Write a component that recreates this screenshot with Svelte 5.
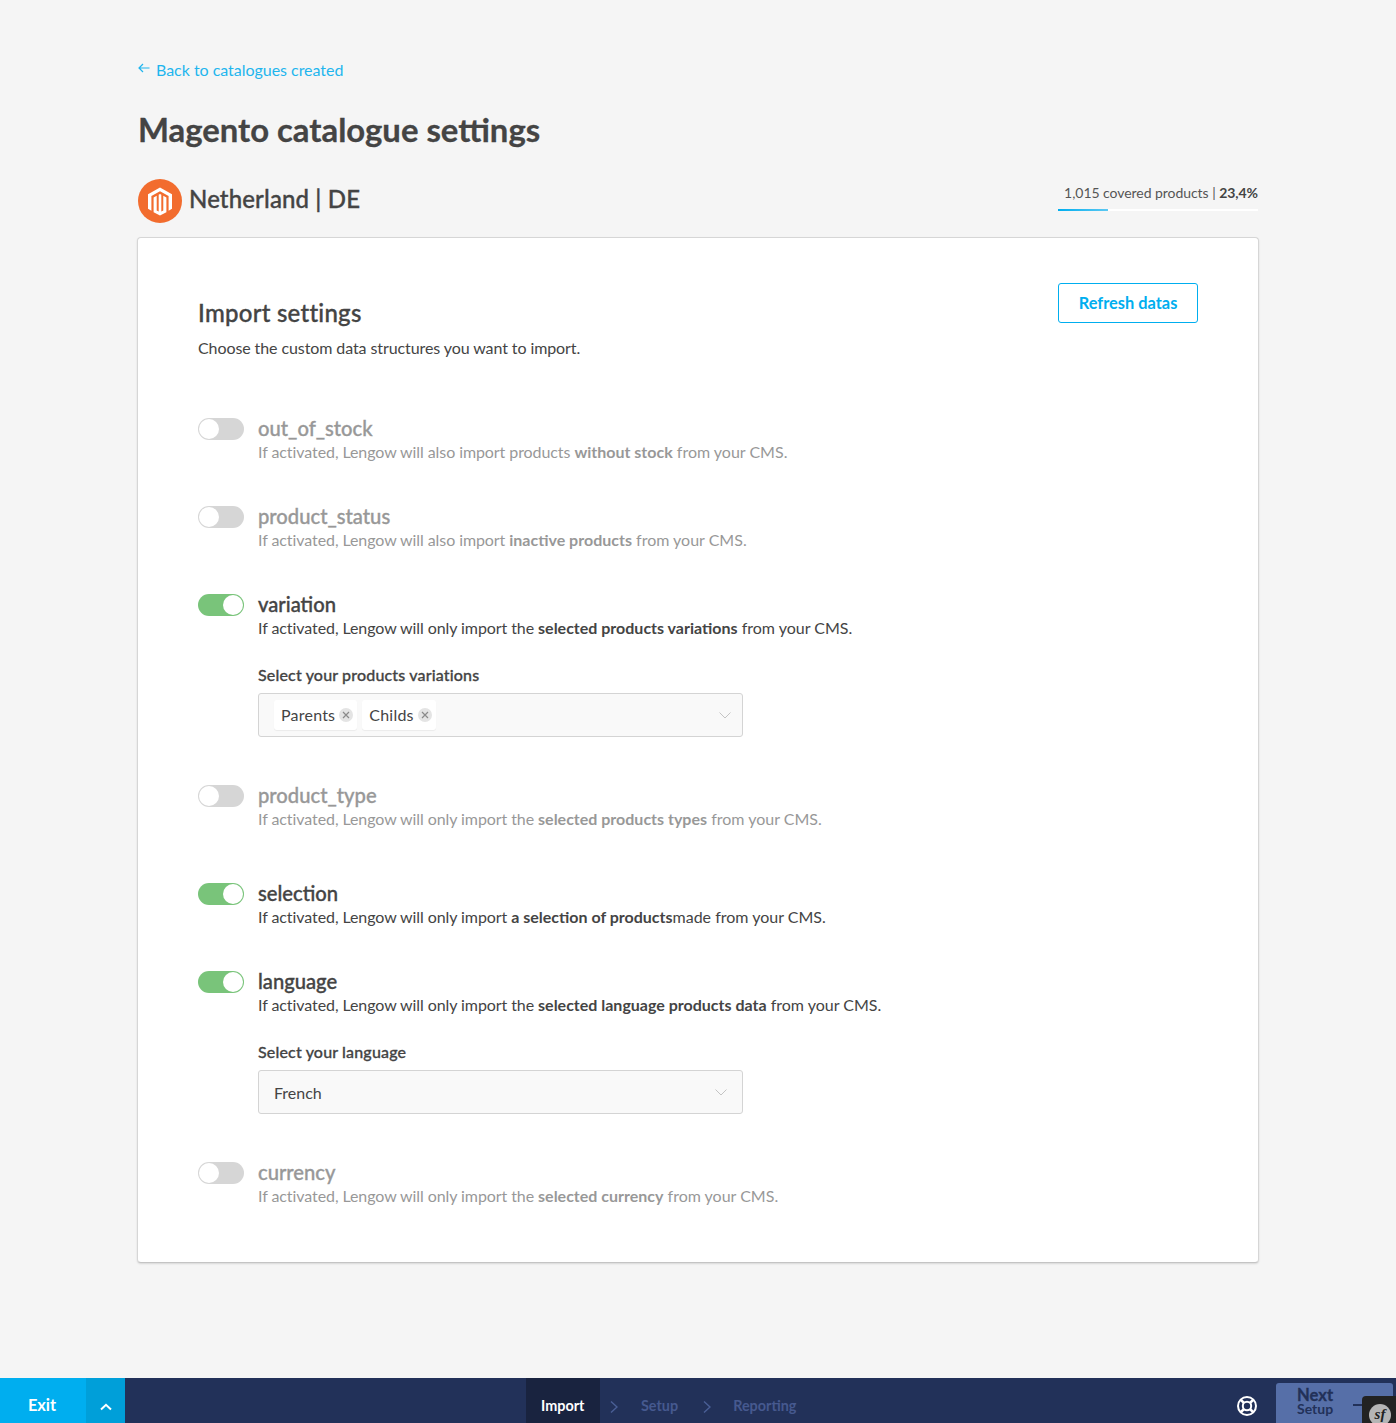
<script>
  const rows = [
    { name: 'out_of_stock', on: false, before: 'If activated, Lengow will also import products ', bold: 'without stock', after: ' from your CMS.' },
    { name: 'product_status', on: false, before: 'If activated, Lengow will also import ', bold: 'inactive products', after: ' from your CMS.' },
    { name: 'variation', on: true, before: 'If activated, Lengow will only import the ', bold: 'selected products variations', after: ' from your CMS.', kind: 'multi', label: 'Select your products variations' },
    { name: 'product_type', on: false, before: 'If activated, Lengow will only import the ', bold: 'selected products types', after: ' from your CMS.', wide: true },
    { name: 'selection', on: true, before: 'If activated, Lengow will only import ', bold: 'a selection of products', after: 'made from your CMS.' },
    { name: 'language', on: true, before: 'If activated, Lengow will only import the ', bold: 'selected language products data', after: ' from your CMS.', kind: 'single', label: 'Select your language' },
    { name: 'currency', on: false, before: 'If activated, Lengow will only import the ', bold: 'selected currency', after: ' from your CMS.' }
  ];
  const tags = ['Parents', 'Childs'];
</script>

<div class="root">
  <main class="page">
    <a class="back" href="#back">
      <svg class="back-ico" viewBox="0 0 12 10" width="12" height="10" fill="none" stroke="currentColor" stroke-width="1.2"><path d="M11.5 5H1M5 1 1 5l4 4" /></svg>
      Back to catalogues created
    </a>
    <h1>Magento catalogue settings</h1>
    <div class="head">
      <div class="shop">
        <svg class="logo" viewBox="0 0 44 44" width="44" height="44">
          <circle cx="22" cy="22" r="22" fill="#f26c2e" />
          <path fill="#fff" d="M22 8.5 34 15.2v14.6l-3.4 2V17L22 12.2 13.4 17v14.8l-3.4-2V15.2z" />
          <path fill="#fff" d="M15.6 18.6l3.1-1.8v14.6l2 1.2V15.8l1.3-.7 1.3.7V32.6l2-1.2V16.8l3.1 1.8v14.6L22 36.5l-6.4-3.3z" />
        </svg>
        <span class="shop-name">Netherland | DE</span>
      </div>
      <div class="cover">
        <div class="cover-text">1,015 covered products | <b>23,4%</b></div>
        <div class="bar"><div class="fill" style="width: 25%"></div></div>
      </div>
    </div>

    <section class="card">
      <div class="card-head">
        <div>
          <h2>Import settings</h2>
          <p class="lead">Choose the custom data structures you want to import.</p>
        </div>
        <button class="refresh">Refresh datas</button>
      </div>

      <div class="rows">
        {#each rows as r}
          <div class="row" class:off={!r.on} class:wide={r.wide}>
            <div class="toggle" class:on={r.on}><span class="knob"></span></div>
            <div class="body">
              <div class="name">{r.name}</div>
              <div class="desc"><span class="lead-in">{r.before}</span><b>{r.bold}</b>{r.after}</div>
              {#if r.kind}
                <div class="field-label">{r.label}</div>
                <div class="select" class:multi={r.kind === 'multi'}>
                  {#if r.kind === 'multi'}
                    {#each tags as t}
                      <span class="tag">{t}<span class="x"><svg viewBox="0 0 8 8" width="8" height="8" fill="none" stroke="#8a8a8a" stroke-width="1.2"><path d="M1 1l6 6M7 1 1 7" /></svg></span></span>
                    {/each}
                  {:else}
                    <span class="value">French</span>
                  {/if}
                  <svg class="chev" viewBox="0 0 12 7" width="12" height="7" fill="none" stroke="#c4c4c4" stroke-width="1"><path d="M.5.5 6 6 11.5.5" /></svg>
                </div>
              {/if}
            </div>
          </div>
        {/each}
      </div>
    </section>
  </main>

  <footer class="foot">
    <div class="exit">Exit</div>
    <div class="up"><svg viewBox="0 0 12 8" width="12" height="8" fill="none" stroke="#fff" stroke-width="2"><path d="M1 6.5 6 1.8l5 4.7" /></svg></div>
    <nav class="steps">
      <span class="step active">Import</span>
      <svg class="sep" viewBox="0 0 8 12" width="8" height="12" fill="none" stroke="#4a5f96" stroke-width="1.4"><path d="M1 .5 7 6l-6 5.5" /></svg>
      <span class="step">Setup</span>
      <svg class="sep two" viewBox="0 0 8 12" width="8" height="12" fill="none" stroke="#4a5f96" stroke-width="1.4"><path d="M1 .5 7 6l-6 5.5" /></svg>
      <span class="step">Reporting</span>
    </nav>
    <svg class="help" viewBox="0 0 22 22" width="22" height="22" fill="none" stroke="#fff"><circle cx="11" cy="11" r="9" stroke-width="2" /><circle cx="11" cy="11" r="4.2" stroke-width="2" /><path stroke-width="2.6" d="M4.6 4.6l3.4 3.4M17.4 4.6 14 8M4.6 17.4 8 14M17.4 17.4 14 14" /></svg>
    <div class="next"><span class="n1">Next</span><span class="n2">Setup</span><span class="dash"></span></div>
    <div class="sf"><span class="sf-dot"><i>sf</i></span></div>
  </footer>
</div>

<style>
  :global(body) { margin: 0; background: #f5f5f5; }
  .root { height: 1423px; overflow: hidden; position: relative; font-family: Lato, "Open Sans", sans-serif; color: #444; }
  .page { height: 1378px; box-sizing: border-box; padding: 59px 138px 0; }
  .back { display: flex; align-items: center; height: 20px; font-size: 16px; letter-spacing: -.03px; color: #1fb5ee; text-decoration: none; }
  .back-ico { margin-right: 6px; margin-top: -2px; }
  h1 { margin: 29px 0 0; font-size: 32.85px; line-height: 44px; font-weight: 700; color: #444; -webkit-text-stroke: .3px #444; }
  .head { display: flex; justify-content: space-between; margin-top: 27px; height: 58px; }
  .shop { display: flex; align-items: flex-start; gap: 7px; }
  .logo { display: block; }
  .shop-name { font-size: 24px; line-height: 40px; color: #444; font-weight: 500; -webkit-text-stroke: .35px #444; letter-spacing: .13px; }
  .cover { width: 200px; }
  .cover-text { font-size: 14px; line-height: 18px; text-align: right; color: #555; margin-top: 5px; white-space: nowrap; letter-spacing: -.05px; }
  .cover-text b { color: #444; }
  .bar { height: 2px; background: #fff; margin-top: 7px; }
  .fill { height: 2px; background: linear-gradient(90deg, #00aeef, #5cc8f2); }
  .card { box-sizing: border-box; margin: 0 -1px 0 -1px; height: 1026px; background: #fff; border: 1px solid #d6d6d6; border-bottom-color: #c4c4c4; border-radius: 4px; box-shadow: 0 1px 2px rgba(0,0,0,.12); padding: 45px 60px 0; }
  .card-head { display: flex; justify-content: space-between; align-items: flex-start; }
  h2 { margin: 14px 0 0; font-size: 24px; line-height: 32px; font-weight: 500; color: #444; -webkit-text-stroke: .35px #444; letter-spacing: .25px; }
  .lead { margin: 8px 0 0; font-size: 16px; line-height: 22px; color: #444; letter-spacing: -.09px; }
  .refresh { box-sizing: border-box; width: 140px; height: 40px; background: #fff; border: 1px solid #00aeef; border-radius: 3px; color: #00aeef; font: 700 16.4px Lato, sans-serif; padding: 0 0 2px; }
  .rows { margin-top: 59px; display: flex; flex-direction: column; }
  .row { display: flex; gap: 14px; padding-bottom: 43px; }
  .row.wide { padding-bottom: 53px; }
  .row.off .body { opacity: .55; }
  .toggle { box-sizing: border-box; width: 46px; height: 22px; border-radius: 11px; background: #d6d6d6; position: relative; flex: none; }
  .toggle.on { background: #79c47a; }
  .knob { position: absolute; left: 1px; top: 1px; width: 20px; height: 20px; border-radius: 50%; background: #fff; }
  .toggle.on .knob { left: 25px; }
  .body { flex: 1; }
  .name { font-size: 20.2px; line-height: 22px; margin-top: -1px; font-weight: 500; color: #444; -webkit-text-stroke: .35px #444; }
  .desc { font-size: 16px; line-height: 22px; margin-top: 2px; color: #444; white-space: nowrap; }
  .lead-in { letter-spacing: -.08px; }
  .desc b { font-weight: 700; }
  .field-label { font-size: 16px; font-weight: 500; line-height: 22px; margin-top: 25px; color: #444; -webkit-text-stroke: .3px #444; letter-spacing: .16px; }
  .select { box-sizing: border-box; width: 485px; height: 44px; margin-top: 7px; border: 1px solid #d4d4d4; border-radius: 3px; background: #f9f9f9; display: flex; align-items: center; padding: 0 15px; position: relative; font-size: 16px; color: #444; margin-bottom: 5px; }
  .select.multi { gap: 5px; }
  .tag { box-sizing: border-box; display: inline-flex; align-items: center; gap: 4px; height: 30px; padding: 0 4px 2px 7px; background: #fff; border-radius: 3px; box-shadow: 0 1px 1px rgba(0,0,0,.06); letter-spacing: .22px; }
  .x { width: 14px; height: 14px; border-radius: 50%; background: #e4e4e4; display: inline-flex; align-items: center; justify-content: center; position: relative; top: 1px; }
  .chev { position: absolute; right: 11px; top: 18px; }
  .select:not(.multi) .chev { right: 15px; top: 18px; }
  .foot { height: 60px; background: #223159; display: flex; position: relative; align-items: flex-start; }
  .exit { box-sizing: border-box; width: 86px; height: 100%; padding-right: 2px; background: #00aeef; color: #fff; font-size: 16.4px; font-weight: 700; line-height: 54px; text-align: center; }
  .up { width: 39px; height: 100%; background: #009fd9; display: flex; justify-content: center; padding-top: 25px; box-sizing: border-box; }
  .steps { position: absolute; left: 526px; top: 0; height: 100%; display: flex; align-items: flex-start; }
  .step { font-size: 14.4px; font-weight: 700; line-height: 56px; color: #46598f; }
  .step.active { background: #19233f; color: #fff; padding: 0 15px; height: 100%; box-sizing: border-box; width: 74px; }
  .sep { margin: 23px 23px 0 10px; }
  .sep.two { margin: 23px 22px 0 25px; }
  .help { position: absolute; left: 1236px; top: 17px; }
  .next { box-sizing: border-box; position: absolute; left: 1276px; top: 5px; width: 117px; height: 60px; padding: 5px 0 0 21px; display: flex; flex-direction: column; background: #566fa8; border-radius: 3px 3px 0 0; color: #223159; }
  .n1 { font-size: 16.6px; line-height: 14px; font-weight: 700; -webkit-text-stroke: .3px #223159; }
  .n2 { font-size: 14px; line-height: 14px; font-weight: 700; }
  .dash { position: absolute; left: 77px; top: 21px; width: 10px; height: 1.5px; background: #223159; }
  .sf { position: absolute; left: 1362px; top: 18px; width: 40px; height: 40px; background: #222; border-radius: 4px 0 0 0; }
  .sf-dot { position: absolute; left: 7px; top: 8px; width: 22px; height: 22px; border-radius: 50%; background: #b5b5b5; color: #222; font: italic 700 15px/21px "Liberation Serif", serif; text-align: center; }
  .sf-dot i { font-style: italic; }
</style>
